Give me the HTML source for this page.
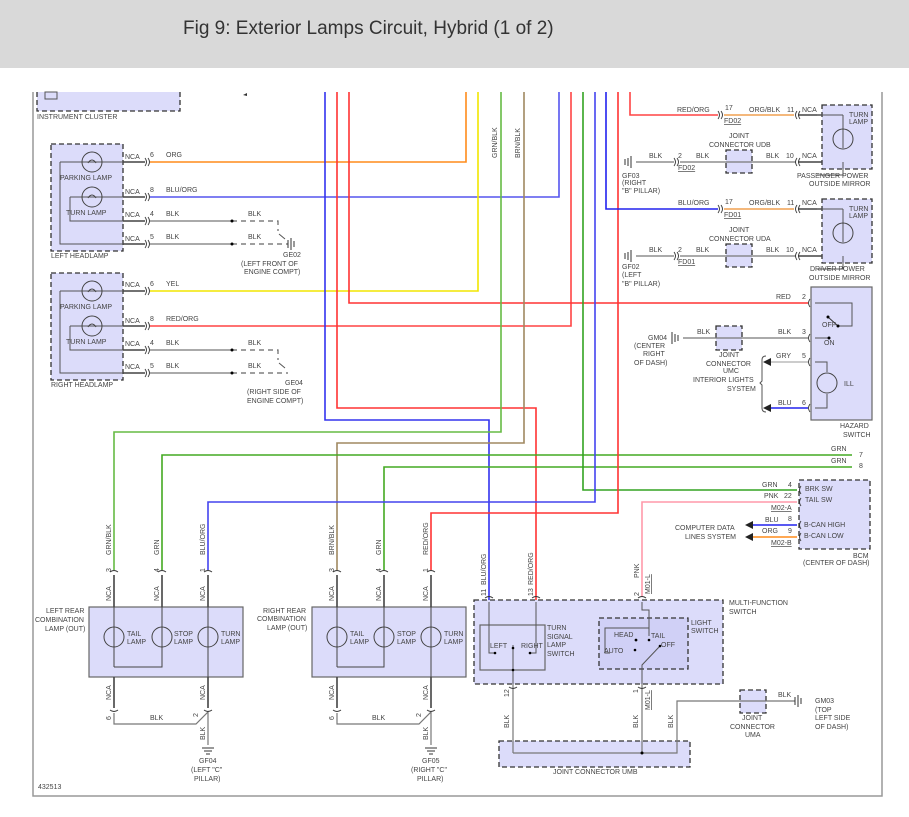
<!DOCTYPE html>
<html><head><meta charset="utf-8"><style>
html,body{margin:0;padding:0;background:#fff;width:909px;height:817px;overflow:hidden}
#hdr{position:absolute;left:0;top:0;width:909px;height:68px;background:#d9d9d9}
#hdr span{position:absolute;left:183px;top:18px;font:19px "Liberation Sans",sans-serif;color:#333}
svg{position:absolute;left:0;top:0}
text{font-family:"Liberation Sans",sans-serif;font-size:7px;fill:#444}
.w{fill:none;stroke-width:1.6}
.k{fill:none;stroke:#444;stroke-width:1.6}
.g{fill:none;stroke:#777;stroke-width:1.2}
.bx{fill:#dcdcfa;stroke:#333;stroke-width:1.3;stroke-dasharray:5,3}
.bs{fill:#dcdcfa;stroke:#666;stroke-width:1.2}
.lamp{fill:none;stroke:#444;stroke-width:1}
</style></head><body>
<div id="hdr"><span>Fig 9: Exterior Lamps Circuit, Hybrid (1 of 2)</span></div>
<svg width="909" height="817" viewBox="0 0 909 817">
<!-- frame -->
<path d="M33,92 V796 H882 V92" fill="none" stroke="#999" stroke-width="1.5"/>
<!-- instrument cluster -->
<path d="M37,92 V111 H180 V92" class="bx"/>
<rect x="45" y="92" width="12" height="7" fill="none" stroke="#555"/>
<text x="37" y="119">INSTRUMENT CLUSTER</text>
<path d="M243,95 l4,-2 v3z" fill="#333"/>

<!-- boxes -->
<rect x="51" y="144" width="72" height="107" class="bx"/>
<rect x="51" y="273" width="72" height="107" class="bx"/>
<rect x="822" y="105" width="50" height="64" class="bx"/>
<rect x="822" y="199" width="50" height="64" class="bx"/>
<rect x="726" y="150" width="26" height="23" class="bx"/>
<rect x="726" y="244" width="26" height="23" class="bx"/>
<rect x="811" y="287" width="61" height="133" class="bs"/>
<rect x="716" y="326" width="26" height="24" class="bx"/>
<rect x="799" y="480" width="71" height="69" class="bx"/>
<rect x="474" y="600" width="249" height="84" class="bx"/>
<rect x="480" y="625" width="65" height="45" class="bs"/>
<rect x="599" y="618" width="89" height="51" class="bx" style="fill:#d0d0f6"/>
<rect x="499" y="741" width="191" height="26" class="bx"/>
<rect x="740" y="690" width="26" height="23" class="bx"/>
<rect x="89" y="607" width="154" height="70" class="bs"/>
<rect x="312" y="607" width="154" height="70" class="bs"/>

<!-- colored wires -->
<path class="w" stroke="#ff8c1a" d="M150,162 H466 V92"/>
<path class="w" stroke="#5555ee" d="M150,197 H559 V92"/>
<path class="w" stroke="#f2e600" d="M150,291 H478 V92"/>
<path class="w" stroke="#ff4444" d="M150,326 H571 V92"/>
<path class="w" stroke="#ff3333" d="M808,303 H349 V92"/>
<path class="w" stroke="#ff3333" d="M536,600 V408 H337 V92"/>
<path class="w" stroke="#3333ee" d="M489,600 V420 H325 V92"/>
<path class="w" stroke="#66bb44" d="M114,570 V432 H501 V92"/>
<path class="w" stroke="#a08860" d="M337,570 V443 H524 V92"/>
<path class="w" stroke="#44aa22" d="M162,570 V455 H852"/>
<path class="w" stroke="#44aa22" d="M384,570 V467 H852"/>
<path class="w" stroke="#33a322" d="M797,490 H583 V92"/>
<path class="w" stroke="#4444ee" d="M208,570 V502 H595 V92"/>
<path class="w" stroke="#ff3333" d="M431,570 V513 H618 V92"/>
<path class="w" stroke="#ff99aa" d="M797,502 H642 V597"/>
<path class="w" stroke="#ff4444" d="M718,115 H630 V92"/>
<path class="w" stroke="#2222ee" d="M718,209 H606 V92"/>
<path class="w" stroke="#f0a050" d="M724,115 H794"/>
<path class="w" stroke="#f0a050" d="M724,209 H794"/>
<path class="w" stroke="#2222ee" d="M749,525 H797"/>
<path class="w" stroke="#ff8c1a" d="M749,537 H797"/>
<path class="w" stroke="#2222ee" d="M770,408 H808"/>
<path class="w" stroke="#bbb" d="M770,362 H808"/>
<path d="M745,525 l8,-4 v8z M745,537 l8,-4 v8z M763,362 l8,-4 v8z M763,408 l8,-4 v8z" fill="#222"/>
<path d="M766,356 q-4,0 -4,4 v21 l-2,2 l2,2 v23 q0,4 4,4" fill="none" stroke="#555"/>

<!-- black/gray wires -->
<path class="k" d="M123,162 H145 M123,197 H145 M123,221 H145 M123,244 H145 M123,291 H145 M123,326 H145 M123,350 H145 M123,373 H145"/>
<path class="g" d="M150,221 H232 M150,244 H232 M150,350 H232 M150,373 H232"/>
<path d="M232,221 H278 V231 M232,244 H288 M232,350 H278 V360 M232,373 H288" fill="none" stroke="#666" stroke-dasharray="5,4" stroke-width="1.2"/>
<path d="M279,234 l6,5 M279,363 l6,5" stroke="#555"/>
<circle cx="232" cy="221" r="1.5"/><circle cx="232" cy="244" r="1.5"/><circle cx="232" cy="350" r="1.5"/><circle cx="232" cy="373" r="1.5"/>
<path class="k" d="M798,115 H822 M798,209 H822 M798,162 H822 M798,256 H822"/>
<path class="g" d="M636,162 H674 M680,162 H796 M636,256 H674 M680,256 H796 M683,338 H808"/>
<path class="g" d="M513,684 V753 M642,684 V753 M513,753 H677 V701 H795"/>
<circle cx="642" cy="753" r="1.5"/>
<path class="k" d="M114,575 V607 M162,575 V607 M208,575 V607 M337,575 V607 M384,575 V607 M431,575 V607 M114,677 V708 M208,677 V708 M337,677 V708 M431,677 V708"/>
<path class="g" d="M114,713 V724 H196 L208,712 V745 M337,713 V724 H419 L431,712 V745"/>
<!-- lamp internal wiring -->
<path d="M114,607 V667 M162,607 V667 H114 M208,607 V677 M337,607 V667 M384,607 V667 H337 M431,607 V677" fill="none" stroke="#444"/>
<path d="M60,162 H123 M60,162 V244 H123 M70,197 V221 H123 M70,197 H123 M60,291 H123 M60,291 V373 H123 M70,326 V350 H123 M70,326 H123" fill="none" stroke="#555"/>
<path d="M848,115 H822 M848,115 V148 M848,162 V175 H822 M848,209 H822 M848,209 V242 M848,256 V269 H822" fill="none" stroke="#555" transform="translate(-5,0)"/>
<!-- hazard internals -->
<path d="M815,303 H852 V326 H838 M815,338 H829 M815,362 H827 V372 M827,394 V408 H815" fill="none" stroke="#555"/>
<path d="M828,317 L838,326" stroke="#333"/><circle cx="828" cy="317" r="1.5"/><circle cx="838" cy="326" r="1.5"/><circle cx="829" cy="338" r="1.5"/>
<circle cx="827" cy="383" r="10" class="lamp"/>
<!-- MFS internals -->
<path d="M489,602 V653 H495 M536,602 V653 H530 M513,648 V684 M513,645 V653 M642,602 V610 H649 V628 H605 V653 H610 M649,618 V636 M642,684 V665 L660,646" fill="none" stroke="#555"/>
<circle cx="495" cy="653" r="1.3"/><circle cx="530" cy="653" r="1.3"/><circle cx="513" cy="648" r="1.3"/><circle cx="513" cy="670" r="1.3"/><circle cx="636" cy="640" r="1.3"/><circle cx="649" cy="640" r="1.3"/><circle cx="636" cy="640" r="1.3"/><circle cx="660" cy="646" r="1.3"/><circle cx="635" cy="650" r="1.3"/>
<!-- bulbs -->
<g class="lamp">
<circle cx="92" cy="162" r="10"/><circle cx="92" cy="197" r="10"/><circle cx="92" cy="291" r="10"/><circle cx="92" cy="326" r="10"/>
<circle cx="843" cy="139" r="10"/><circle cx="843" cy="233" r="10"/>
<circle cx="114" cy="637" r="10"/><circle cx="162" cy="637" r="10"/><circle cx="208" cy="637" r="10"/>
<circle cx="337" cy="637" r="10"/><circle cx="384" cy="637" r="10"/><circle cx="431" cy="637" r="10"/>
<path d="M88,163 q4,-6 8,0 M88,198 q4,-6 8,0 M88,292 q4,-6 8,0 M88,327 q4,-6 8,0"/>
</g>
<!-- connector marks -->
<g fill="none" stroke="#333" stroke-width="0.9">
<path d="M145,158 q3,4 0,8 M148,158 q3,4 0,8 M145,193 q3,4 0,8 M148,193 q3,4 0,8 M145,217 q3,4 0,8 M148,217 q3,4 0,8 M145,240 q3,4 0,8 M148,240 q3,4 0,8 M145,287 q3,4 0,8 M148,287 q3,4 0,8 M145,322 q3,4 0,8 M148,322 q3,4 0,8 M145,346 q3,4 0,8 M148,346 q3,4 0,8 M145,369 q3,4 0,8 M148,369 q3,4 0,8"/>
<path d="M718,111 q3,4 0,8 M721,111 q3,4 0,8 M718,205 q3,4 0,8 M721,205 q3,4 0,8 M674,158 q3,4 0,8 M677,158 q3,4 0,8 M674,252 q3,4 0,8 M677,252 q3,4 0,8"/>
<path d="M797,111 q-3,4 0,8 M800,111 q-3,4 0,8 M797,158 q-3,4 0,8 M800,158 q-3,4 0,8 M797,205 q-3,4 0,8 M800,205 q-3,4 0,8 M797,252 q-3,4 0,8 M800,252 q-3,4 0,8"/>
<path d="M810,299 q-3,4 0,8 M810,334 q-3,4 0,8 M810,358 q-3,4 0,8 M810,404 q-3,4 0,8 M801,486 q-3,4 0,8 M801,498 q-3,4 0,8 M801,521 q-3,4 0,8 M801,533 q-3,4 0,8"/>
<path d="M110,572 q4,-3 8,0 M158,572 q4,-3 8,0 M204,572 q4,-3 8,0 M333,572 q4,-3 8,0 M380,572 q4,-3 8,0 M427,572 q4,-3 8,0 M110,710 q4,3 8,0 M204,710 q4,3 8,0 M333,710 q4,3 8,0 M427,710 q4,3 8,0 M485,598 q4,-3 8,0 M532,598 q4,-3 8,0 M638,598 q4,-3 8,0 M509,687 q4,3 8,0 M638,687 q4,3 8,0"/>
</g>
<!-- grounds -->
<g stroke="#333" stroke-width="1" fill="none">
<path d="M288,240 v8 M291,238 v12 M294,241 v6 M628,158 v8 M631,156 v12 M625,159 v6 M628,252 v8 M631,250 v12 M625,253 v6 M675,334 v8 M672,332 v12 M678,335 v6 M795,697 v8 M798,695 v12 M801,698 v6 M202,748 h12 M204,751 h8 M206,754 h4 M425,748 h12 M427,751 h8 M429,754 h4"/>
</g>
<!-- text -->
<text x="60" y="180">PARKING LAMP</text><text x="66" y="215">TURN LAMP</text><text x="51" y="258">LEFT HEADLAMP</text>
<text x="60" y="309">PARKING LAMP</text><text x="66" y="344">TURN LAMP</text><text x="51" y="387">RIGHT HEADLAMP</text>
<g><text x="125" y="159">NCA</text><text x="150" y="157">6</text><text x="166" y="157">ORG</text>
<text x="125" y="194">NCA</text><text x="150" y="192">8</text><text x="166" y="192">BLU/ORG</text>
<text x="125" y="217">NCA</text><text x="150" y="216">4</text><text x="166" y="216">BLK</text><text x="248" y="216">BLK</text>
<text x="125" y="241">NCA</text><text x="150" y="239">5</text><text x="166" y="239">BLK</text><text x="248" y="239">BLK</text>
<text x="283" y="257">GE02</text><text x="241" y="266">(LEFT FRONT OF</text><text x="244" y="274">ENGINE COMPT)</text>
<text x="125" y="287">NCA</text><text x="150" y="286">6</text><text x="166" y="286">YEL</text>
<text x="125" y="323">NCA</text><text x="150" y="321">8</text><text x="166" y="321">RED/ORG</text>
<text x="125" y="346">NCA</text><text x="150" y="345">4</text><text x="166" y="345">BLK</text><text x="248" y="345">BLK</text>
<text x="125" y="369">NCA</text><text x="150" y="368">5</text><text x="166" y="368">BLK</text><text x="248" y="368">BLK</text>
<text x="285" y="385">GE04</text><text x="247" y="394">(RIGHT SIDE OF</text><text x="247" y="403">ENGINE COMPT)</text></g>
<text transform="translate(497,158) rotate(-90)">GRN/BLK</text>
<text transform="translate(520,158) rotate(-90)">BRN/BLK</text>
<!-- right side text -->
<text x="677" y="112">RED/ORG</text><text x="725" y="110">17</text><text x="749" y="112">ORG/BLK</text><text x="787" y="112">11</text><text x="802" y="112">NCA</text>
<text x="724" y="123" text-decoration="underline">FD02</text>
<text x="849" y="117">TURN</text><text x="849" y="124">LAMP</text>
<text x="729" y="138">JOINT</text><text x="709" y="147">CONNECTOR UDB</text>
<text x="649" y="158">BLK</text><text x="678" y="158">2</text><text x="696" y="158">BLK</text><text x="766" y="158">BLK</text><text x="786" y="158">10</text><text x="802" y="158">NCA</text>
<text x="678" y="170" text-decoration="underline">FD02</text>
<text x="622" y="178">GF03</text><text x="622" y="185">(RIGHT</text><text x="622" y="193">"B" PILLAR)</text>
<text x="797" y="178">PASSENGER POWER</text><text x="809" y="186">OUTSIDE MIRROR</text>
<text x="678" y="205">BLU/ORG</text><text x="725" y="204">17</text><text x="749" y="205">ORG/BLK</text><text x="787" y="205">11</text><text x="802" y="205">NCA</text>
<text x="724" y="217" text-decoration="underline">FD01</text>
<text x="849" y="211">TURN</text><text x="849" y="218">LAMP</text>
<text x="729" y="232">JOINT</text><text x="709" y="241">CONNECTOR UDA</text>
<text x="649" y="252">BLK</text><text x="678" y="252">2</text><text x="696" y="252">BLK</text><text x="766" y="252">BLK</text><text x="786" y="252">10</text><text x="802" y="252">NCA</text>
<text x="678" y="264" text-decoration="underline">FD01</text>
<text x="622" y="269">GF02</text><text x="622" y="277">(LEFT</text><text x="622" y="286">"B" PILLAR)</text>
<text x="810" y="271">DRIVER POWER</text><text x="809" y="280">OUTSIDE MIRROR</text>
<text x="776" y="299">RED</text><text x="802" y="299">2</text>
<text x="822" y="327">OFF</text><text x="824" y="345">ON</text><text x="844" y="386">ILL</text>
<text x="697" y="334">BLK</text><text x="778" y="334">BLK</text><text x="802" y="334">3</text>
<text x="648" y="340">GM04</text><text x="634" y="348">(CENTER</text><text x="643" y="356">RIGHT</text><text x="634" y="365">OF DASH)</text>
<text x="719" y="357">JOINT</text><text x="706" y="366">CONNECTOR</text><text x="723" y="373">UMC</text>
<text x="693" y="382">INTERIOR LIGHTS</text><text x="727" y="391">SYSTEM</text>
<text x="776" y="358">GRY</text><text x="802" y="358">5</text><text x="778" y="405">BLU</text><text x="802" y="405">6</text>
<text x="840" y="428">HAZARD</text><text x="843" y="437">SWITCH</text>
<text x="831" y="451">GRN</text><text x="859" y="457">7</text><text x="831" y="463">GRN</text><text x="859" y="468">8</text>
<text x="762" y="487">GRN</text><text x="788" y="487">4</text><text x="764" y="498">PNK</text><text x="784" y="498">22</text>
<text x="771" y="510" text-decoration="underline">M02-A</text>
<text x="805" y="491">BRK SW</text><text x="805" y="502">TAIL SW</text>
<text x="765" y="522">BLU</text><text x="788" y="521">8</text><text x="762" y="533">ORG</text><text x="788" y="533">9</text>
<text x="771" y="545" text-decoration="underline">M02-B</text>
<text x="804" y="527">B-CAN HIGH</text><text x="804" y="538">B-CAN LOW</text>
<text x="675" y="530">COMPUTER DATA</text><text x="685" y="539">LINES SYSTEM</text>
<text x="853" y="558">BCM</text><text x="803" y="565">(CENTER OF DASH)</text>
<!-- MFS text -->
<text transform="translate(486,585) rotate(-90)">BLU/ORG</text><text transform="translate(486,596) rotate(-90)">11</text>
<text transform="translate(533,585) rotate(-90)">RED/ORG</text><text transform="translate(533,596) rotate(-90)">13</text>
<text transform="translate(639,578) rotate(-90)">PNK</text><text transform="translate(639,596) rotate(-90)">2</text>
<text transform="translate(650,594) rotate(-90)" text-decoration="underline">M01-L</text>
<text x="729" y="605">MULTI-FUNCTION</text><text x="729" y="614">SWITCH</text>
<text x="547" y="630">TURN</text><text x="547" y="639">SIGNAL</text><text x="547" y="647">LAMP</text><text x="547" y="656">SWITCH</text>
<text x="490" y="648">LEFT</text><text x="521" y="648">RIGHT</text>
<text x="691" y="625">LIGHT</text><text x="691" y="633">SWITCH</text>
<text x="614" y="637">HEAD</text><text x="651" y="638">TAIL</text><text x="604" y="653">AUTO</text><text x="661" y="647">OFF</text>
<text transform="translate(509,697) rotate(-90)">12</text>
<text transform="translate(638,693) rotate(-90)">1</text>
<text transform="translate(650,710) rotate(-90)" text-decoration="underline">M01-L</text>
<text transform="translate(509,728) rotate(-90)">BLK</text>
<text transform="translate(638,728) rotate(-90)">BLK</text>
<text transform="translate(673,728) rotate(-90)">BLK</text>
<text x="553" y="774">JOINT CONNECTOR UMB</text>
<text x="778" y="697">BLK</text>
<text x="815" y="703">GM03</text><text x="815" y="712">(TOP</text><text x="815" y="720">LEFT SIDE</text><text x="815" y="729">OF DASH)</text>
<text x="742" y="720">JOINT</text><text x="730" y="729">CONNECTOR</text><text x="745" y="737">UMA</text>
<!-- rear lamps text -->
<text x="46" y="613">LEFT REAR</text><text x="35" y="622">COMBINATION</text><text x="45" y="631">LAMP (OUT)</text>
<text x="263" y="613">RIGHT REAR</text><text x="257" y="621">COMBINATION</text><text x="267" y="630">LAMP (OUT)</text>
<text x="127" y="636">TAIL</text><text x="127" y="644">LAMP</text><text x="174" y="636">STOP</text><text x="174" y="644">LAMP</text><text x="221" y="636">TURN</text><text x="221" y="644">LAMP</text>
<text x="350" y="636">TAIL</text><text x="350" y="644">LAMP</text><text x="397" y="636">STOP</text><text x="397" y="644">LAMP</text><text x="444" y="636">TURN</text><text x="444" y="644">LAMP</text>
<g>
<text transform="translate(111,555) rotate(-90)">GRN/BLK</text><text transform="translate(111,572) rotate(-90)">3</text><text transform="translate(111,601) rotate(-90)">NCA</text>
<text transform="translate(159,555) rotate(-90)">GRN</text><text transform="translate(159,572) rotate(-90)">4</text><text transform="translate(159,601) rotate(-90)">NCA</text>
<text transform="translate(205,555) rotate(-90)">BLU/ORG</text><text transform="translate(205,572) rotate(-90)">1</text><text transform="translate(205,601) rotate(-90)">NCA</text>
<text transform="translate(334,555) rotate(-90)">BRN/BLK</text><text transform="translate(334,572) rotate(-90)">3</text><text transform="translate(334,601) rotate(-90)">NCA</text>
<text transform="translate(381,555) rotate(-90)">GRN</text><text transform="translate(381,572) rotate(-90)">4</text><text transform="translate(381,601) rotate(-90)">NCA</text>
<text transform="translate(428,555) rotate(-90)">RED/ORG</text><text transform="translate(428,572) rotate(-90)">1</text><text transform="translate(428,601) rotate(-90)">NCA</text>
<text transform="translate(111,700) rotate(-90)">NCA</text><text transform="translate(205,700) rotate(-90)">NCA</text><text transform="translate(334,700) rotate(-90)">NCA</text><text transform="translate(428,700) rotate(-90)">NCA</text>
<text transform="translate(111,720) rotate(-90)">6</text><text transform="translate(198,717) rotate(-90)">2</text><text transform="translate(334,720) rotate(-90)">6</text><text transform="translate(421,717) rotate(-90)">2</text>
<text transform="translate(205,740) rotate(-90)">BLK</text><text transform="translate(428,740) rotate(-90)">BLK</text>
</g>
<text x="150" y="720">BLK</text><text x="372" y="720">BLK</text>
<text x="199" y="763">GF04</text><text x="191" y="772">(LEFT "C"</text><text x="194" y="781">PILLAR)</text>
<text x="422" y="763">GF05</text><text x="411" y="772">(RIGHT "C"</text><text x="417" y="781">PILLAR)</text>
<text x="38" y="789">432513</text>
</svg>
</body></html>
